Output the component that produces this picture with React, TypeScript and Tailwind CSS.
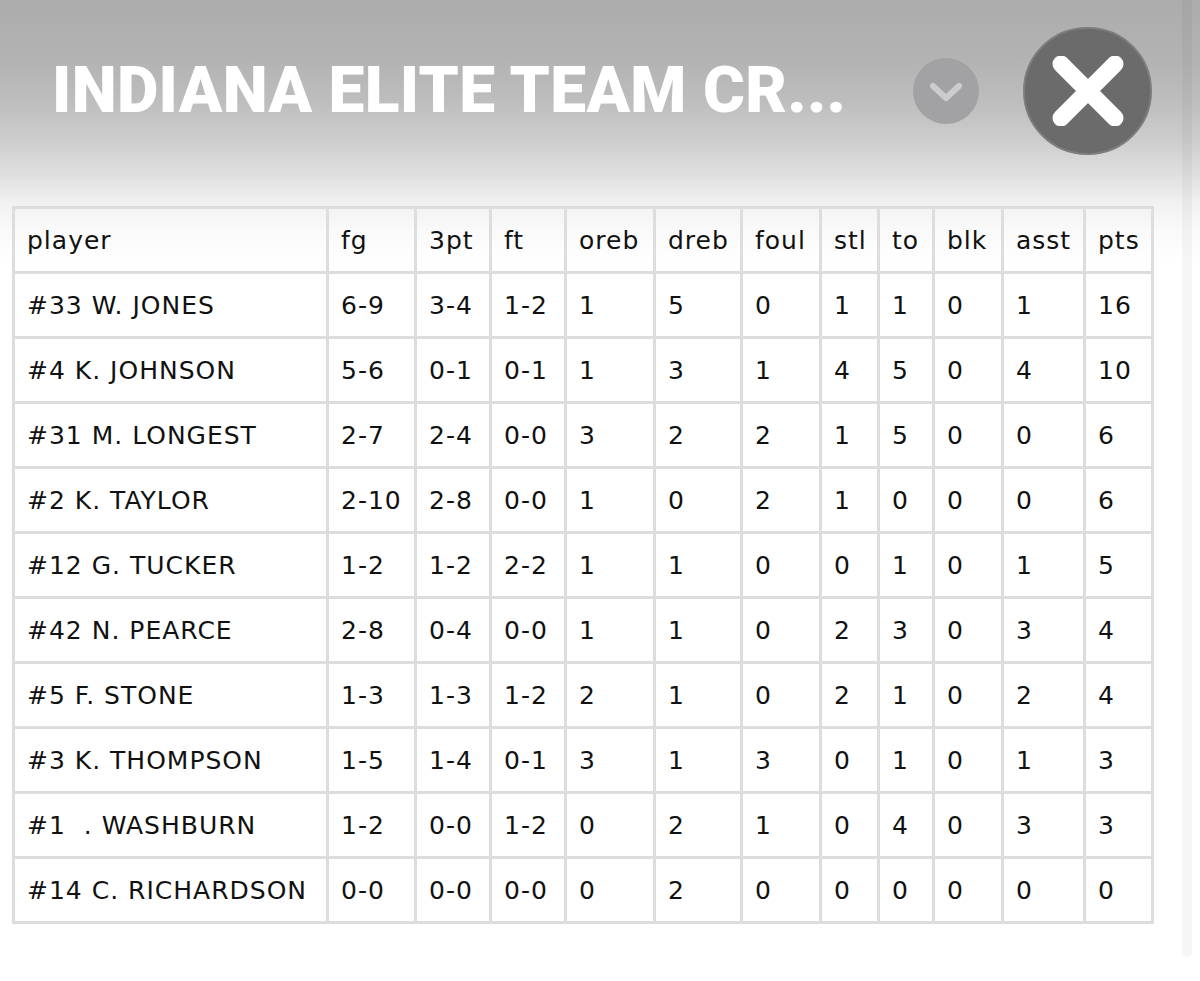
const COLS = [
  { key: "player", w: "w-[314px]" },
  { key: "fg", w: "w-[88px]" },
  { key: "3pt", w: "w-[75px]" },
  { key: "ft", w: "w-[75px]" },
  { key: "oreb", w: "w-[89px]" },
  { key: "dreb", w: "w-[87px]" },
  { key: "foul", w: "w-[79px]" },
  { key: "stl", w: "w-[58px]" },
  { key: "to", w: "w-[55px]" },
  { key: "blk", w: "w-[69px]" },
  { key: "asst", w: "w-[82px]" },
  { key: "pts", w: "w-[68px]" },
];

const ROWS: string[][] = [
  ["#33 W. JONES", "6-9", "3-4", "1-2", "1", "5", "0", "1", "1", "0", "1", "16"],
  ["#4 K. JOHNSON", "5-6", "0-1", "0-1", "1", "3", "1", "4", "5", "0", "4", "10"],
  ["#31 M. LONGEST", "2-7", "2-4", "0-0", "3", "2", "2", "1", "5", "0", "0", "6"],
  ["#2 K. TAYLOR", "2-10", "2-8", "0-0", "1", "0", "2", "1", "0", "0", "0", "6"],
  ["#12 G. TUCKER", "1-2", "1-2", "2-2", "1", "1", "0", "0", "1", "0", "1", "5"],
  ["#42 N. PEARCE", "2-8", "0-4", "0-0", "1", "1", "0", "2", "3", "0", "3", "4"],
  ["#5 F. STONE", "1-3", "1-3", "1-2", "2", "1", "0", "2", "1", "0", "2", "4"],
  ["#3 K. THOMPSON", "1-5", "1-4", "0-1", "3", "1", "3", "0", "1", "0", "1", "3"],
  ["#1  . WASHBURN", "1-2", "0-0", "1-2", "0", "2", "1", "0", "4", "0", "3", "3"],
  ["#14 C. RICHARDSON", "0-0", "0-0", "0-0", "0", "2", "0", "0", "0", "0", "0", "0"],
];

function Row({ cells, head }: { cells: string[]; head?: boolean }) {
  return (
    <div className={`flex h-[65px] ${head ? "" : "bg-white"}`}>
      {cells.map((c, i) => (
        <div
          key={i}
          className={`${COLS[i].w} flex shrink-0 items-center whitespace-pre border-b-[3px] border-r-[3px] border-[#dddddd] pl-[12px] pt-[1px]`}
        >
          {c}
        </div>
      ))}
    </div>
  );
}

export default function App() {
  return (
    <div className="relative min-h-[981px] w-full overflow-hidden bg-[linear-gradient(to_bottom,#acacac_0px,#b3b3b3_60px,#bdbdbd_100px,#cdcdcd_140px,#e0e0e0_175px,#f2f2f2_205px,#fafafa_232px,#ffffff_262px)]">
      <div className="flex h-[182px] items-center pl-[52px]">
        <div className="w-[861px] font-['Roboto',sans-serif] text-[64px] font-black leading-none tracking-[0.3px] text-white">
          INDIANA ELITE TEAM CR...
        </div>
        <div className="flex h-[66px] w-[66px] items-center justify-center rounded-full bg-[#a2a2a4]">
          <svg width="34" height="20" viewBox="0 0 34 20" className="mt-[2px]">
            <path d="M4 4 L17 16 L30 4" fill="none" stroke="#cbcbd0" strokeWidth="6" strokeLinecap="round" strokeLinejoin="round" />
          </svg>
        </div>
        <div className="ml-[44px] flex h-[128px] w-[129px] items-center justify-center rounded-full border-[2px] border-[#7d7d7d] bg-[#6b6b6b]">
          <svg width="72" height="70" viewBox="0 0 72 70">
            <path d="M9 8 L63 62 M63 8 L9 62" fill="none" stroke="#ffffff" strokeWidth="17" strokeLinecap="round" />
          </svg>
        </div>
      </div>

      <div className="ml-[12px] mt-[24px] w-fit border-l-[3px] border-t-[3px] border-[#dddddd] font-['DejaVu_Sans',sans-serif] text-[25px] tracking-[1px] text-[#111111]">
        <Row head cells={COLS.map((c) => c.key)} />
        {ROWS.map((r) => (
          <Row key={r[0]} cells={r} />
        ))}
      </div>

      <div className="absolute right-[8px] top-0 h-[957px] w-[10px] rounded-b-full bg-black/[0.035]" />
    </div>
  );
}
